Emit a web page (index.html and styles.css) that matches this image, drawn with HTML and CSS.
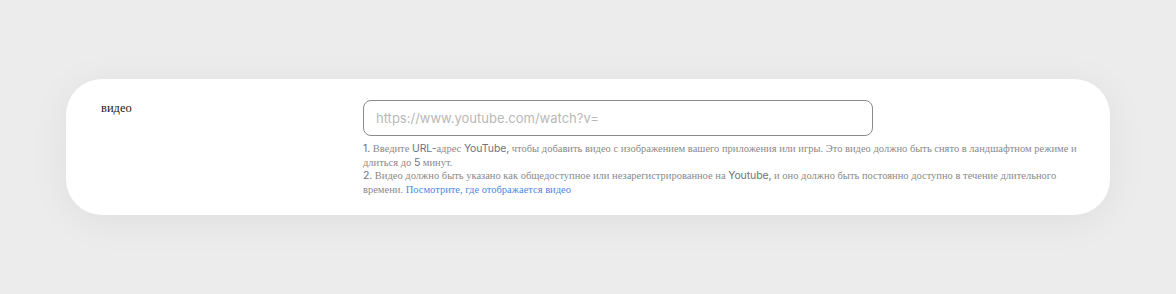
FILE: index.html
```html
<!DOCTYPE html>
<html lang="ru">
<head>
    <meta charset="UTF-8">
    <meta name="viewport" content="width=device-width, initial-scale=1.0">
    <title>Видео</title>
    <link rel="stylesheet" href="styles.css">
</head>
<body>
    <div class="card">
        <label class="field-label" for="video">видео</label>
        <div class="field">
            <input type="text" id="video" class="url-input" placeholder="https://www.youtube.com/watch?v=">
            <div class="hint">
                <p><span class="sans">1.</span> Введите <span class="sans">URL-</span>адрес <span class="sans">YouTube,</span> чтобы добавить видео с изображением вашего приложения или игры. Это видео должно быть снято в ландшафтном режиме и длиться до <span class="sans">5</span> минут.</p>
                <p><span class="sans">2.</span> Видео должно быть указано как общедоступное или незарегистрированное на <span class="sans">Youtube,</span> и оно должно быть постоянно доступно в течение длительного времени. <a href="#" class="hint-link">Посмотрите, где отображается видео</a></p>
            </div>
        </div>
    </div>
</body>
</html>
```

FILE: styles.css
```css
body {
    margin: 0;
    height: 100vh;
    background: #ececec;
    display: flex;
    justify-content: center;
    align-items: center;
    font-family: "Liberation Serif", serif;
}
.card {
    width: 1044px;
    box-sizing: border-box;
    background: #fff;
    border-radius: 36px;
    box-shadow: 0 6px 40px rgba(0, 0, 0, 0.06);
    padding: 21px 33px 19px 35px;
    display: grid;
    grid-template-columns: 262px 1fr;
}
.field-label {
    font-size: 12.5px;
    color: #222;
    padding-top: 1px;
}
.url-input {
    display: block;
    width: 510px;
    height: 36px;
    box-sizing: border-box;
    border: 1px solid #8a8a8a;
    border-radius: 8px;
    padding: 0 12px;
    font-family: Inter, "Liberation Sans", sans-serif;
    font-size: 13px;
    outline: none;
}
.url-input::placeholder {
    color: #b8b8b8;
}
.hint {
    margin-top: 6px;
    font-size: 10.5px;
    line-height: 13.5px;
    color: #8a8a8a;
}
.hint p {
    margin: 0;
}
.sans {
    font-family: Inter, "Liberation Sans", sans-serif;
    font-size: 10.5px;
    letter-spacing: -0.1px;
    color: #6f7180;
}
.hint-link {
    color: #4d86e6;
    text-decoration: none;
}
```
